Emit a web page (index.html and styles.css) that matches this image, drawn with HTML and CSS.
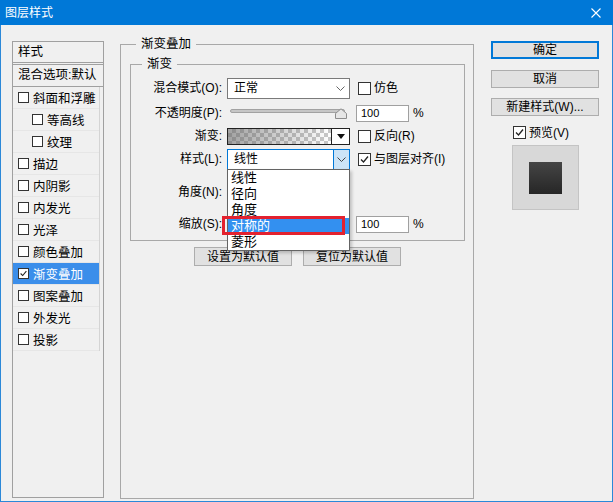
FILE: index.html
```html
<!DOCTYPE html>
<html lang="zh-CN">
<head>
  <meta charset="UTF-8" />
  <title>图层样式</title>
  <link rel="stylesheet" href="styles.css">
</head>
<body>
  <div class="window">
    <div class="titlebar">
      <span>图层样式</span>
      <svg class="close" viewBox="0 0 10 10"><path d="M0.5 0.5L9.5 9.5M9.5 0.5L0.5 9.5" stroke="#fff" stroke-width="1.1"/></svg>
    </div>

    <div class="content">
      <!-- 左侧样式列表 -->
      <div class="style-list">
        <div class="list-head">样式</div>
        <div class="list-head blend">混合选项:默认</div>
        <div class="list-body">
          <div class="item"><span class="cb"></span>斜面和浮雕</div>
          <div class="item sub"><span class="cb"></span>等高线</div>
          <div class="item sub"><span class="cb"></span>纹理</div>
          <div class="item"><span class="cb"></span>描边</div>
          <div class="item"><span class="cb"></span>内阴影</div>
          <div class="item"><span class="cb"></span>内发光</div>
          <div class="item"><span class="cb"></span>光泽</div>
          <div class="item"><span class="cb"></span>颜色叠加</div>
          <div class="item active"><span class="cb"><svg viewBox="0 0 11 11"><path d="M2 5.5L4.5 8L9 2.5" fill="none" stroke="#222" stroke-width="1.3"/></svg></span>渐变叠加</div>
          <div class="item"><span class="cb"></span>图案叠加</div>
          <div class="item"><span class="cb"></span>外发光</div>
          <div class="item"><span class="cb"></span>投影</div>
        </div>
      </div>

      <!-- 渐变叠加 -->
      <fieldset class="group outer">
        <legend>渐变叠加</legend>
        <fieldset class="group inner">
          <legend>渐变</legend>

          <div class="row r1">
            <span class="lbl">混合模式(O):</span>
            <div class="select">
              <span>正常</span>
              <svg class="chev" viewBox="0 0 9 5"><path d="M0.5 0.5L4.5 4.5L8.5 0.5" fill="none" stroke="#666" stroke-width="1"/></svg>
            </div>
            <span class="check"><span class="cb"></span>仿色</span>
          </div>

          <div class="row r2">
            <span class="lbl">不透明度(P):</span>
            <div class="slider">
              <div class="track"></div>
              <svg class="thumb" viewBox="0 0 12 11"><path d="M0.5 10.5V5.5L6 0.8L11.5 5.5V10.5Z" fill="#e6e6e6" stroke="#8c8c8c"/></svg>
            </div>
            <span class="num">100</span>
            <span class="pct">%</span>
          </div>

          <div class="row r3">
            <span class="lbl">渐变:</span>
            <div class="gradient">
              <div class="fill"></div>
              <div class="drop"><svg viewBox="0 0 8 5"><path d="M0 0H8L4 5Z" fill="#111"/></svg></div>
            </div>
            <span class="check"><span class="cb"></span>反向(R)</span>
          </div>

          <div class="row r4">
            <span class="lbl">样式(L):</span>
            <div class="select open">
              <span>线性</span>
              <div class="arrow">
                <svg class="chev" viewBox="0 0 9 5"><path d="M0.5 0.5L4.5 4.5L8.5 0.5" fill="none" stroke="#444" stroke-width="1"/></svg>
              </div>
              <div class="dropdown">
                <div class="opt">线性</div>
                <div class="opt">径向</div>
                <div class="opt">角度</div>
                <div class="opt hover">对称的</div>
                <div class="opt">菱形</div>
                <div class="mark"></div>
              </div>
            </div>
            <span class="check"><span class="cb"><svg viewBox="0 0 11 11"><path d="M2 5.5L4.5 8L9 2.5" fill="none" stroke="#222" stroke-width="1.3"/></svg></span>与图层对齐(I)</span>
          </div>

          <div class="row r5">
            <span class="lbl">角度(N):</span>
          </div>

          <div class="row r6">
            <span class="lbl">缩放(S):</span>
            <div class="slot"></div>
            <span class="num">100</span>
            <span class="pct">%</span>
          </div>
        </fieldset>

        <div class="defaults">
          <button class="btn">设置为默认值</button>
          <button class="btn">复位为默认值</button>
        </div>
      </fieldset>

      <!-- 右侧按钮 -->
      <div class="actions">
        <button class="btn default">确定</button>
        <button class="btn">取消</button>
        <button class="btn">新建样式(W)...</button>
        <div class="check preview-check"><span class="cb"><svg viewBox="0 0 11 11"><path d="M2 5.5L4.5 8L9 2.5" fill="none" stroke="#222" stroke-width="1.3"/></svg></span>预览(V)</div>
        <div class="preview"><div class="swatch"></div></div>
      </div>
    </div>
  </div>
</body>
</html>
```

FILE: styles.css
```css
* { box-sizing: border-box; }
body {
  margin: 0;
  font-family: "Liberation Sans", "Noto Sans CJK SC", sans-serif;
  font-size: 12px;
  color: #000;
  background: #f0f0f0;
}
.window {
  width: 613px;
  height: 502px;
  display: flex;
  flex-direction: column;
  background: #f0f0f0;
}
.titlebar {
  height: 25px;
  background: #0078d7;
  color: #fff;
  display: flex;
  align-items: center;
  justify-content: space-between;
  padding: 0 12px 0 5px;
  line-height: 16px;
}
.titlebar .close {
  width: 10px;
  height: 10px;
}
.content {
  flex: 1;
  display: flex;
  padding: 11px 0 2px 11px;
  border: 1px solid #2b88d8;
  border-top: none;
}

/* 样式列表 */
.style-list {
  width: 92px;
  margin: 5px 0 1px;
  border: 1px solid #a0a0a0;
  font-size: 12.5px;
}
.list-head {
  height: 21px;
  line-height: 20px;
  padding-left: 5px;
  border-bottom: 1px solid #a0a0a0;
}
.list-head.blend {
  height: 23px;
  margin-top: 1px;
  border-top: 1px solid #a0a0a0;
  line-height: 21px;
  white-space: nowrap;
}
.list-body {
  margin-right: 3px;
  border-right: 1px solid #d4d4d4;
}
.item {
  height: 22px;
  display: flex;
  align-items: center;
  padding-left: 5px;
  border-bottom: 1px solid #e6e6e6;
  white-space: nowrap;
}
.item.sub { padding-left: 19px; }
.item .cb {
  width: 11px;
  height: 11px;
  margin-right: 4px;
}
.item.active {
  background: #3b8eea;
  color: #fff;
}
.cb {
  width: 13px;
  height: 13px;
  border: 1px solid #333;
  background: #fff;
  display: inline-flex;
  flex-shrink: 0;
}
.cb svg {
  width: 100%;
  height: 100%;
}

/* 分组框 */
.group {
  margin: 0;
  min-width: 0;
  border: 1px solid #a8a8a8;
}
.group legend {
  padding: 0 5px;
  line-height: 16px;
  font-size: 12.5px;
}
.outer {
  width: 354px;
  margin-left: 16px;
  padding: 4px 8px 0 9px;
}
.outer > legend { margin-left: 6px; }
.inner {
  padding: 0 0 5px;
}
.inner > legend { margin-left: 11px; }

.row {
  display: flex;
  align-items: center;
  height: 22px;
  line-height: 16px;
}
.r1 { margin-top: 5px; }
.r2 { margin-top: 3px; }
.r3 { margin-top: 1px; }
.r4 { margin-top: 1px; }
.r5 { margin-top: 11px; }
.r6 { margin-top: 10px; }
.lbl {
  width: 91px;
  margin-right: 5px;
  text-align: right;
  white-space: nowrap;
}
.select {
  width: 123px;
  height: 21px;
  border: 1px solid #7a7a7a;
  background: #fff;
  display: flex;
  align-items: center;
  justify-content: space-between;
  padding-left: 6px;
}
.select .chev {
  width: 9px;
  height: 5px;
  margin-right: 4px;
}
.select.open {
  position: relative;
  border-color: #0078d7;
}
.select.open .arrow {
  width: 16px;
  height: 100%;
  background: #cce4f7;
  border-left: 1px solid #0078d7;
  display: flex;
  align-items: center;
  justify-content: center;
}
.select.open .arrow .chev { margin: 0; }
.check {
  display: flex;
  align-items: center;
  margin-left: 8px;
  white-space: nowrap;
}
.check .cb { margin-right: 3px; }

.slider {
  position: relative;
  width: 123px;
  height: 22px;
  padding: 7px 5px 0 3px;
}
.track {
  height: 4px;
  background: #c6c6c6;
  border: 1px solid #a2a2a2;
  border-radius: 2px;
}
.thumb {
  position: absolute;
  left: 108px;
  top: 6px;
  width: 12px;
  height: 11px;
}
.slot { width: 123px; }
.num {
  width: 53px;
  height: 17px;
  margin-left: 6px;
  padding-left: 4px;
  border: 1px solid #a0a0a0;
  background: #fff;
  font-size: 11px;
  line-height: 15px;
}
.pct { margin-left: 4px; }

.gradient {
  width: 123px;
  height: 17px;
  border: 1px solid #222;
  display: flex;
}
.gradient .fill {
  flex: 1;
  background:
    linear-gradient(to right, rgba(100, 100, 100, 0.6), rgba(100, 100, 100, 0)),
    repeating-conic-gradient(#c8c8c8 0 25%, #fff 0 50%) 0 0 / 8px 8px;
}
.gradient .drop {
  width: 18px;
  border-left: 1px solid #222;
  background: #fff;
  display: flex;
  align-items: center;
  justify-content: center;
}
.gradient .drop svg {
  width: 8px;
  height: 5px;
}

/* 下拉列表 */
.dropdown {
  position: absolute;
  left: -1px;
  top: 100%;
  width: 123px;
  border: 1px solid #646464;
  background: #fff;
  box-shadow: 2px 2px 3px rgba(0, 0, 0, 0.2);
  z-index: 5;
  font-size: 13px;
}
.opt {
  height: 16px;
  line-height: 16px;
  padding-left: 3px;
}
.opt.hover {
  background: #3390f0;
  color: #fff;
}
.mark {
  position: absolute;
  left: -6px;
  top: 46px;
  width: 123px;
  height: 19px;
  border: 3px solid #e3222f;
}

.defaults {
  display: flex;
  justify-content: center;
  gap: 11px;
  margin-top: 6px;
}
.btn {
  height: 18px;
  padding: 0;
  background: #e1e1e1;
  border: 1px solid #adadad;
  font: inherit;
  line-height: 14px;
  color: #000;
}
.defaults .btn {
  width: 98px;
  height: 19px;
}

/* 右侧 */
.actions {
  width: 108px;
  margin: 5px 0 0 17px;
  display: flex;
  flex-direction: column;
}
.actions .btn { margin-top: 11px; }
.actions .btn:nth-child(3) { margin-top: 10px; }
.actions .btn.default {
  margin-top: 0;
  border-color: #0078d7;
  box-shadow: inset 0 0 0 1px #0078d7;
}
.preview-check {
  height: 17px;
  margin: 8px 0 0;
  padding-left: 22px;
  line-height: 16px;
}
.preview {
  width: 67px;
  height: 65px;
  margin: 4px auto 0;
  background: #d8d8d8;
  border: 1px solid #c4c4c4;
  display: flex;
  align-items: center;
  justify-content: center;
}
.swatch {
  width: 33px;
  height: 32px;
  background: linear-gradient(#454545, #262626);
}
```
